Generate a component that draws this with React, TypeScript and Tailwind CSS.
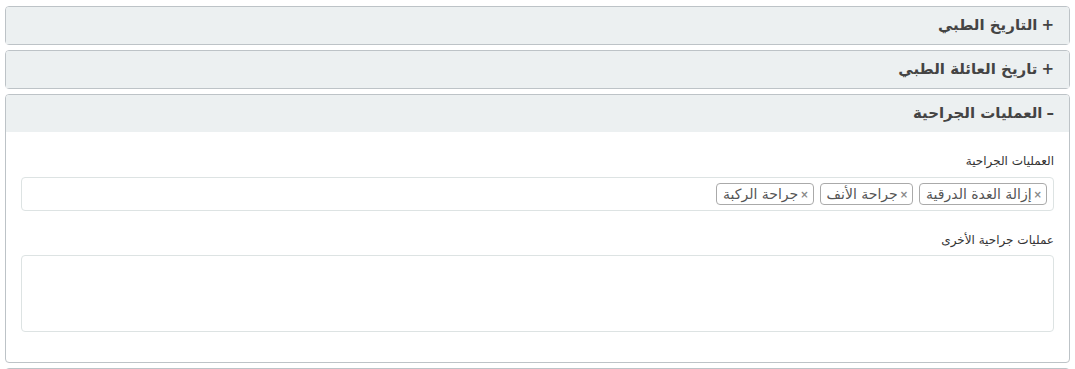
import React from "react";

const font = { fontFamily: '"DejaVu Sans", "Noto Sans", sans-serif' };

function Panel({ title, sign, children }: { title: string; sign: string; children?: React.ReactNode }) {
  return (
    <div className="mb-[5px] rounded-[4px] border border-[#bdc3c7] bg-white">
      <div className="flex h-[37px] items-center gap-[4px] rounded-t-[3px] bg-[#ecf0f1] px-[15px] text-[15px] font-bold text-[#444]">
        <span>{sign}</span>
        <span>{title}</span>
      </div>
      {children}
    </div>
  );
}

function Tag({ label }: { label: string }) {
  return (
    <div className="flex h-[22px] items-center gap-[2px] rounded-[4px] border border-[#aaaaaa] bg-white pl-[6px] pr-[4px] text-[14px] text-[#555]">
      <span className="text-[10px] font-bold text-[#888]">×</span>
      <span>{label}</span>
    </div>
  );
}

export default function App() {
  return (
    <div dir="rtl" style={font} className="h-[369px] overflow-hidden bg-white px-[5px] pt-[6px] text-[#333]">
      <Panel title="التاريخ الطبي" sign="+" />
      <Panel title="تاريخ العائلة الطبي" sign="+" />
      <Panel title="العمليات الجراحية" sign="–">
        <div className="px-[15px] pb-[30px] pt-[20px]">
          <div className="mb-[7px] text-[12px] text-[#333]">العمليات الجراحية</div>
          <div className="flex h-[34px] items-center gap-[6px] rounded-[4px] border border-[#dde3e3] px-[6px]">
            <Tag label="إزالة الغدة الدرقية" />
            <Tag label="جراحة الأنف" />
            <Tag label="جراحة الركبة" />
          </div>
          <div className="mb-[6px] mt-[20px] text-[12px] text-[#333]">عمليات جراحية الأخرى</div>
          <div className="h-[77px] rounded-[4px] border border-[#dde3e3]" />
        </div>
      </Panel>
      <div className="h-[20px] rounded-t-[4px] border border-[#bdc3c7] bg-[#ecf0f1]" />
    </div>
  );
}
